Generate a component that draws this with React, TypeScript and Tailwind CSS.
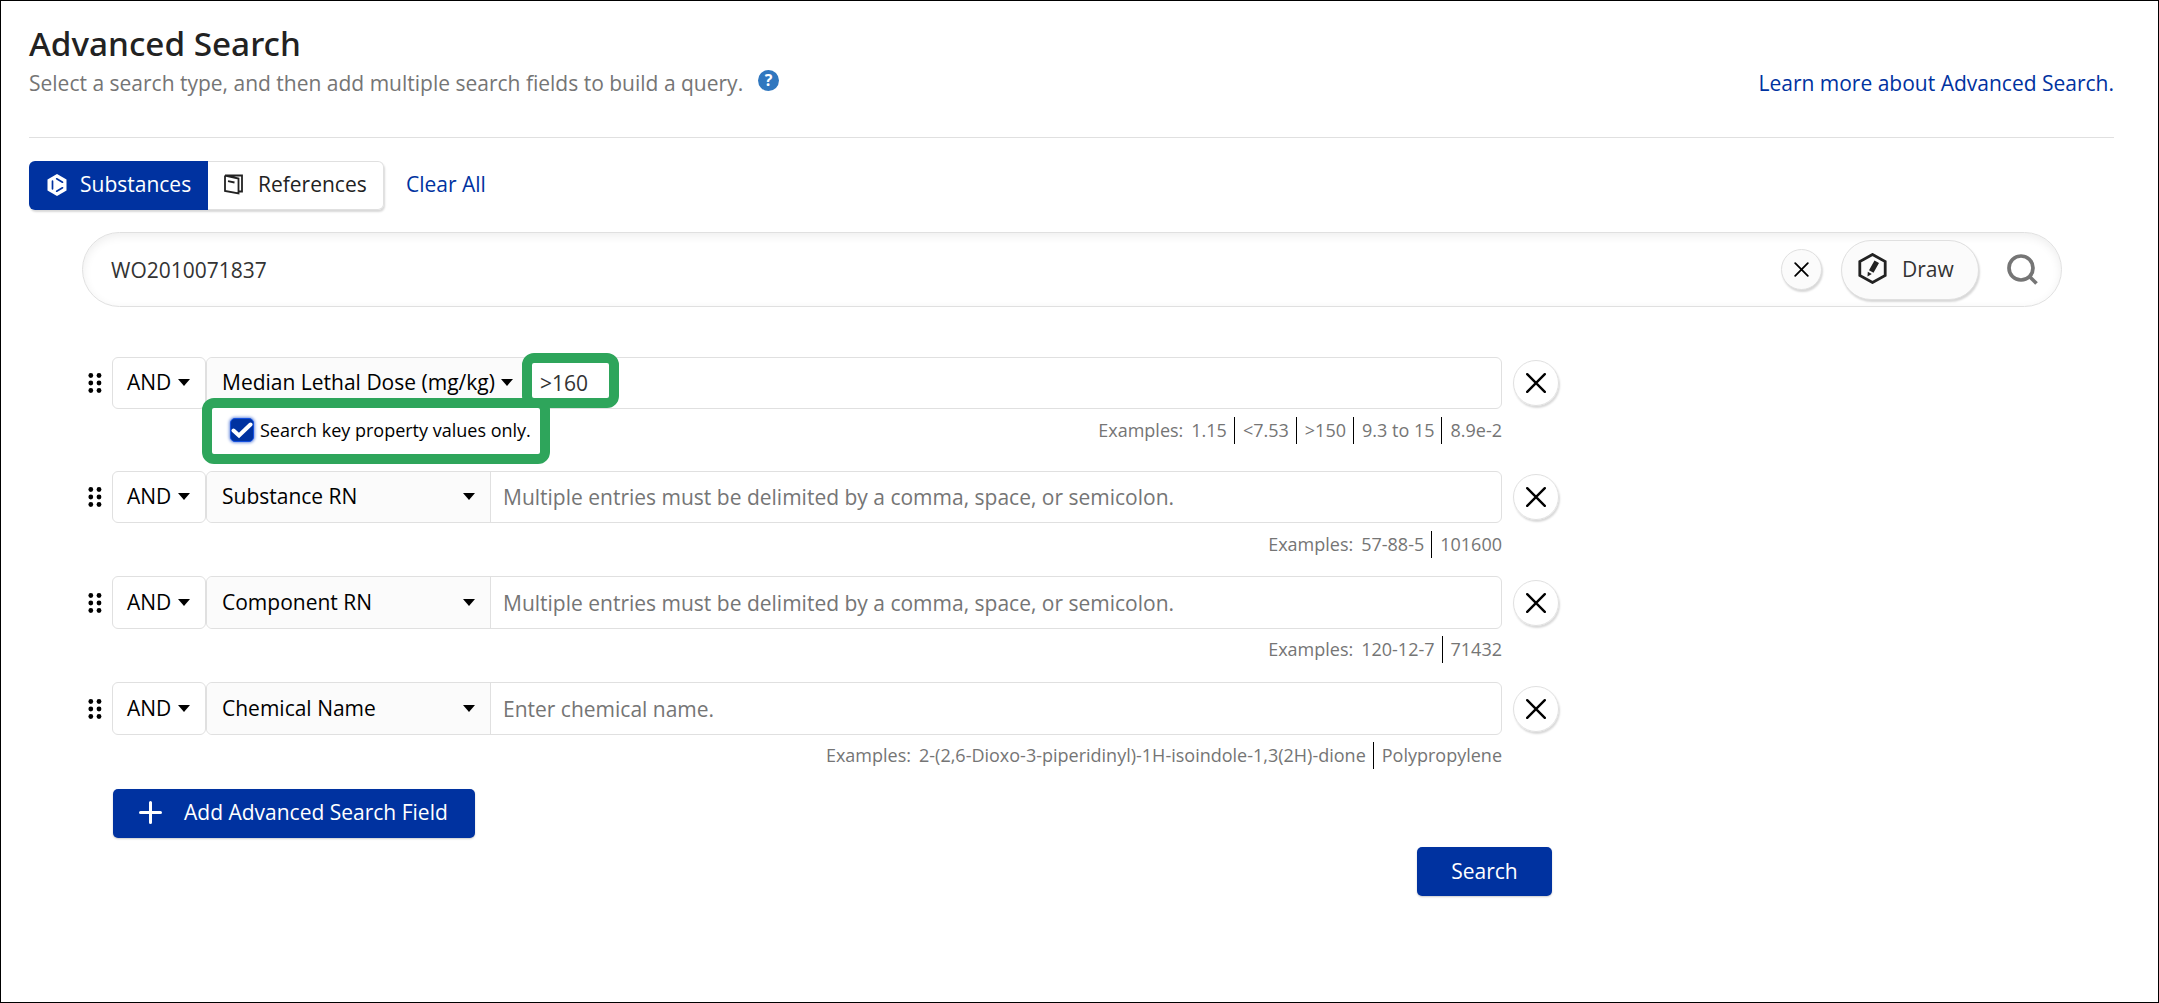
import { ReactNode } from "react";

type Field = {
  name: string;
  value?: string;
  placeholder?: string;
  examples: string[];
  keyOnly?: boolean;
  size: string;
};

const fields: Field[] = [
  {
    name: "Median Lethal Dose (mg/kg)",
    value: ">160",
    examples: ["1.15", "<7.53", ">150", "9.3 to 15", "8.9e-2"],
    keyOnly: true,
    size: "h-[52px] mb-[62px]",
  },
  {
    name: "Substance RN",
    placeholder:
      "Multiple entries must be delimited by a comma, space, or semicolon.",
    examples: ["57-88-5", "101600"],
    size: "h-[52px] mb-[53px]",
  },
  {
    name: "Component RN",
    placeholder:
      "Multiple entries must be delimited by a comma, space, or semicolon.",
    examples: ["120-12-7", "71432"],
    size: "h-[53px] mb-[53px]",
  },
  {
    name: "Chemical Name",
    placeholder: "Enter chemical name.",
    examples: ["2-(2,6-Dioxo-3-piperidinyl)-1H-isoindole-1,3(2H)-dione", "Polypropylene"],
    size: "h-[53px] mb-[54px]",
  },
];

const Caret = () => (
  <svg width="12" height="7" viewBox="0 0 12 7" className="shrink-0">
    <path d="M0 0h12L6 7z" />
  </svg>
);

const Cross = ({ size, width }: { size: number; width: number }) => (
  <svg
    width={size}
    height={size}
    viewBox={`0 0 ${size} ${size}`}
    stroke="#000"
    strokeWidth={width}
    strokeLinecap="round"
  >
    <path d={`M1.2 1.2L${size - 1.2} ${size - 1.2}M${size - 1.2} 1.2L1.2 ${size - 1.2}`} />
  </svg>
);

const Grip = () => (
  <svg width="14" height="20" viewBox="0 0 14 20" className="shrink-0">
    {[2.5, 10, 17.5].map((y) => (
      <g key={y}>
        <circle cx="2.8" cy={y} r="2.4" />
        <circle cx="11" cy={y} r="2.4" />
      </g>
    ))}
  </svg>
);

const BlueButton = ({ className, children }: { className: string; children: ReactNode }) => (
  <button
    className={`flex items-center h-[49px] rounded-[5px] bg-[#0032a0] text-white shadow-[0_1px_2px_#ccc] ${className}`}
  >
    {children}
  </button>
);

const Row = ({ field }: { field: Field }) => (
  <div className="flex items-center h-full">
    <Grip />
    <div className="flex items-center justify-between w-[94px] h-full ml-[10px] pb-px pl-[14px] pr-[15px] border border-[#e0e0e0] rounded-md">
      AND <Caret />
    </div>
    <div className="flex w-[1296px] h-full border border-[#e0e0e0] rounded-md">
      <div
        className={`flex items-center justify-between pb-px pl-[15px] bg-[#fbfbfb] rounded-l-md whitespace-nowrap ${
          field.keyOnly ? "w-[316px] pr-[10px]" : "w-[284px] pr-[15px] border-r border-[#e0e0e0]"
        }`}
      >
        {field.name} <Caret />
      </div>
      {field.value ? (
        <div className="relative z-10 flex items-center w-[97px] -mt-[5px] ml-[-1px] pl-2 pt-[5px] border-[10px] border-[#2ea55b] rounded-xl bg-white text-[#333]">
          {field.value}
        </div>
      ) : (
        <p className="pl-3 pt-px self-center text-[#757575]">{field.placeholder}</p>
      )}
    </div>
    <button className="flex items-center justify-center size-[46px] ml-[11px] border border-[#e0e0e0] rounded-full shadow-[1px_2px_2px_#d8d8d8]">
      <Cross size={20} width={2.4} />
    </button>
  </div>
);

const Hints = ({ field }: { field: Field }) => (
  <div className="flex w-[1414px] items-start text-[18px] leading-[25px]">
    {field.keyOnly && (
      <div className="flex items-center h-[66px] w-[348px] -mt-[11px] ml-[114px] pl-[18px] border-[10px] border-[#2ea55b] rounded-xl bg-white whitespace-nowrap">
        <span className="flex items-center justify-center size-6 mr-1.5 -mt-0.5 rounded-[5px] bg-[#0032a0] border border-[#1450e0] shadow-[0_0_3px_1px_#7896e0]">
          <svg width="22" height="18" viewBox="0 0 22 18" fill="none" stroke="#fff" strokeWidth="4" strokeLinecap="round">
            <path d="M2.5 9.5L8 14.5L19.5 3.5" />
          </svg>
        </span>
        <span className="pb-0.5">Search key property values only.</span>
      </div>
    )}
    <div
      className={`flex ml-auto text-[#757575] ${field.size.startsWith("h-[53px]") ? "mt-[7px]" : "mt-2"}`}
    >
      <span className="mr-2 pt-px">Examples:</span>
      {field.examples.map((text, i) => (
        <span key={text} className={i > 0 ? "ml-[7px] pl-2 pt-px pb-px border-l border-black" : "pt-px"}>
          {text}
        </span>
      ))}
    </div>
  </div>
);

const App = () => {
  return (
    <div className="h-[1003px] border border-black bg-white pl-7 pr-[44px] text-[21px] leading-[29px] text-black font-['Open_Sans',sans-serif]">
      <header className="h-[137px] border-b border-[#e0e0e0] pt-[21px]">
        <h1 className="text-[33.300px] leading-[42px] font-medium font-['Noto_Sans',sans-serif] text-[#222]">
          Advanced Search
        </h1>
        <div className="flex justify-between text-[#757575] mt-[5px]">
          <p className="flex">
            Select a search type, and then add multiple search fields to build a query.
            <span className="flex items-center justify-center size-[21px] ml-[15px] mt-px rounded-full bg-[#3077bf] text-white text-[16px] font-bold">
              ?
            </span>
          </p>
          <a className="text-[#0032a0]">Learn more about Advanced Search.</a>
        </div>
      </header>

      <div className="flex items-center h-[49px] mt-[23px]">
        <div className="flex h-full rounded-md shadow-[1px_2px_2px_#d8d8d8]">
          <button className="flex items-center w-[179px] pl-[18px] gap-[13px] rounded-l-md bg-[#0032a0] text-white">
            <svg width="20" height="22" viewBox="0 0 20 22" className="-mt-0.5">
              <path d="M10 0l9.5 5.5v11L10 22 .5 16.500v-11z" fill="#fff" />
              <path d="M5.500 7.200v7.600M9.700 4.800l5.800 3.400M9.700 17.200l5.800-3.400" stroke="#0032a0" strokeWidth="1.700" strokeLinecap="round" />
            </svg>
            <span className="pb-[3px]">Substances</span>
          </button>
          <button className="flex items-center w-[176px] pl-4 gap-[15px] border border-l-0 border-[#e0e0e0] rounded-r-md text-[#222]">
            <svg width="19" height="21" viewBox="0 0 19 21" fill="none" stroke="#222" strokeWidth="1.800" className="-mt-0.5">
              <path d="M1 1.500h17v16h-3.500M1 1.500v15.500l13.500 2.500V4.500L1 1.500" />
              <path d="M4 7.200l6.500 1.300" />
            </svg>
            <span className="pb-[3px]">References</span>
          </button>
        </div>
        <a className="ml-[22px] -mt-[3px] text-[#0032a0]">Clear All</a>
      </div>

      <div className="flex items-center h-[75px] mt-[22px] ml-[53px] mr-[52px] pl-7 pr-[23px] border border-[#e0e0e0] rounded-full shadow-[inset_0_3px_10px_#eee] text-[#333]">
        <span className="pt-0.5">WO2010071837</span>
        <button className="flex items-center justify-center size-[41px] ml-auto border border-[#e0e0e0] rounded-full bg-[#fbfbfb] shadow-[1px_2px_2px_#d8d8d8]">
          <Cross size={15} width={1.8} />
        </button>
        <button className="flex items-center w-[138px] h-[60px] ml-[19px] pl-4 gap-[15px] border border-[#e0e0e0] rounded-full bg-[#fbfbfb] shadow-[1px_2px_2px_#d8d8d8]">
          <svg width="29" height="31" viewBox="0 0 29 31" className="-mt-0.5">
            <path d="M14.500 1.500l12.700 7v14l-12.700 7-12.700-7v-14z" fill="none" stroke="#222" strokeWidth="2.800" />
            <path d="M16.500 7.500l4.500 2.500-5.500 9.800-4.500-2.500zM9.800 18.800l4 2.300-4.300 2.400z" fill="#222" />
          </svg>
          <span className="pb-px">Draw</span>
        </button>
        <svg width="31" height="31" viewBox="0 0 31 31" fill="none" stroke="#757575" strokeWidth="3.700" className="ml-7">
          <circle cx="14" cy="14" r="12" />
          <path d="M22 22l7.500 7.500" />
        </svg>
      </div>

      <div className="ml-[59px] mt-[50px] flex flex-col w-[1480px]">
        {fields.map((field) => (
          <div key={field.name} className={field.size}>
            <Row field={field} />
            <Hints field={field} />
          </div>
        ))}
        <BlueButton className="w-[362px] ml-[25px] pl-[26px] pb-0.5 gap-[22px]">
          <svg width="23" height="23" viewBox="0 0 23 23" stroke="#fff" strokeWidth="3" strokeLinecap="round">
            <path d="M11.500 1.500v20M1.500 11.500h20" />
          </svg>
          Add Advanced Search Field
        </BlueButton>
        <BlueButton className="w-[135px] mt-[9px] ml-[1329px] justify-center">Search</BlueButton>
      </div>
    </div>
  );
};

export default App;
